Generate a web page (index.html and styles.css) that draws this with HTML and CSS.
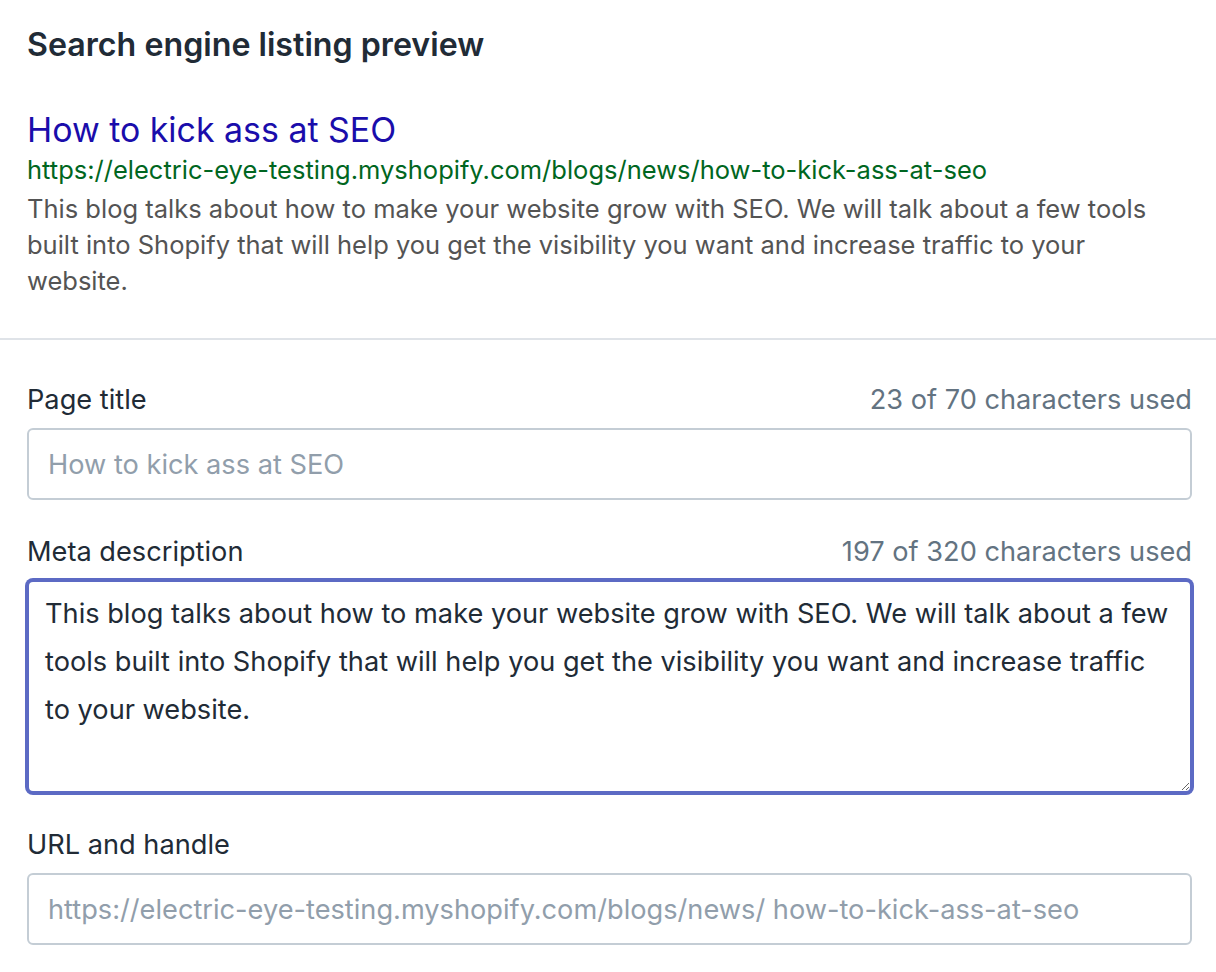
FILE: index.html
```html
<!DOCTYPE html>
<html lang="en">
<head>
<meta charset="utf-8">
<title>Search engine listing preview</title>
<link rel="stylesheet" href="styles.css">
</head>
<body>
<div class="card">
  <section class="preview">
    <h2 class="card-title">Search engine listing preview</h2>
    <div class="serp">
      <div class="serp-title">How to kick ass at SEO</div>
      <div class="serp-url">https://electric-eye-testing.myshopify.com/blogs/news/how-to-kick-ass-at-seo</div>
      <div class="serp-desc">This blog talks about how to make your website grow with SEO. We will talk about a few tools<br>built into Shopify that will help you get the visibility you want and increase traffic to your<br>website.</div>
    </div>
  </section>
  <section class="form">
    <div class="field">
      <div class="label-row"><label class="label" for="title">Page title</label><span class="count">23 of 70 characters used</span></div>
      <input id="title" class="text-input" type="text" placeholder="How to kick ass at SEO">
    </div>
    <div class="field">
      <div class="label-row"><label class="label" for="desc">Meta description</label><span class="count">197 of 320 characters used</span></div>
      <textarea id="desc" class="text-area">This blog talks about how to make your website grow with SEO. We will talk about a few tools built into Shopify that will help you get the visibility you want and increase traffic to your website.</textarea>
    </div>
    <div class="field">
      <div class="label-row"><label class="label">URL and handle</label></div>
      <div class="text-input url-input"><span class="prefix">https://electric-eye-testing.myshopify.com/blogs/news/</span><span class="handle">&nbsp;how-to-kick-ass-at-seo</span></div>
    </div>
  </section>
</div>
</body>
</html>
```
FILE: styles.css
```css
html, body {
  margin: 0;
  padding: 0;
  background: #ffffff;
}

body {
  font-family: "Inter", "Liberation Sans", sans-serif;
  color: #212b36;
}

.card {
  width: 1216px;
}

.preview {
  padding: 21px 27px 39px;
}

.card-title {
  margin: 0;
  font-size: 32.2px;
  font-weight: 600;
  line-height: 48px;
  color: #212b36;
}

.serp {
  margin-top: 39px;
}

.serp-title {
  font-size: 33.9px;
  line-height: 44px;
  color: #1a0dab;
}

.serp-url {
  font-size: 25.5px;
  line-height: 36px;
  color: #006621;
}

.serp-desc {
  margin-top: 3px;
  font-size: 25.5px;
  line-height: 36px;
  color: #545454;
}

.form {
  border-top: 2px solid #dfe3e8;
  padding: 40px 24px 30px 27px;
  display: flex;
  flex-direction: column;
  gap: 32px;
}

.field {
  display: flex;
  flex-direction: column;
  gap: 8px;
}

.label-row {
  display: flex;
  justify-content: space-between;
  align-items: baseline;
  font-size: 27.2px;
  line-height: 40px;
}

.label {
  color: #212b36;
}

.count {
  color: #637381;
}

.text-input {
  box-sizing: border-box;
  width: 100%;
  height: 72px;
  margin: 0;
  padding: 0 19px;
  border: 2px solid #c4cdd5;
  border-radius: 6px;
  background: #ffffff;
  font-family: inherit;
  font-size: 27.2px;
  color: #212b36;
  outline: none;
}

.text-input::placeholder {
  color: #919eab;
}

.url-input {
  display: flex;
  align-items: center;
  white-space: nowrap;
  color: #919eab;
}

.text-area {
  box-sizing: border-box;
  display: block;
  width: 100%;
  height: 213px;
  margin: 0;
  padding: 8px 16px 0 16px;
  border: 2px solid #5c6ac4;
  border-radius: 6px;
  box-shadow: 0 0 0 2px #5c6ac4;
  font-family: inherit;
  font-size: 27.2px;
  line-height: 48px;
  color: #212b36;
  outline: none;
  resize: vertical;
  overflow: hidden;
}
```
